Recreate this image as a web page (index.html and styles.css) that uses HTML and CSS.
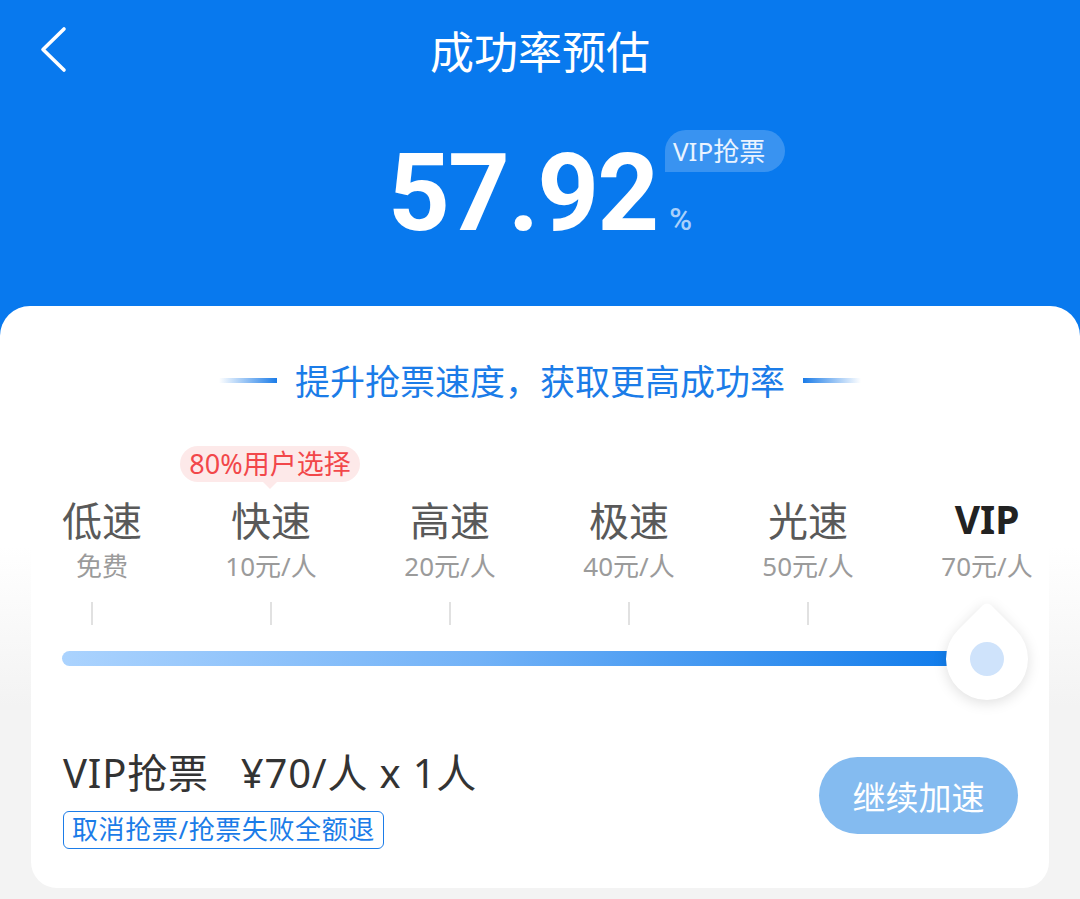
FILE: index.html
```html
<!DOCTYPE html>
<html lang="zh-CN">
<head>
<meta charset="utf-8">
<title>成功率预估</title>
<link rel="stylesheet" href="styles.css">
</head>
<body>
<div class="page">
  <header class="header">
    <div class="nav">
      <svg class="back" width="30" height="48" viewBox="0 0 30 48">
        <path d="M24 4 L3 24.5 L24 45" fill="none" stroke="#fff" stroke-width="3.6" stroke-linecap="round" stroke-linejoin="round"/>
      </svg>
      <div class="title">成功率预估</div>
    </div>
    <div class="score-wrap">
      <div class="score">
        <span class="num">57.92</span>
        <span class="pct">%</span>
        <span class="vip-badge">VIP抢票</span>
      </div>
    </div>
  </header>

  <section class="sheet">
    <div class="heading">
      <span class="line line-left"></span>
      <span class="heading-text">提升抢票速度，获取更高成功率</span>
      <span class="line line-right"></span>
    </div>

    <div class="card">
      <div class="levels">
        <div class="level level-first">
          <div class="lv-name">低速</div>
          <div class="lv-price">免费</div>
          <div class="tick"></div>
        </div>
        <div class="level">
          <div class="hot">80%用户选择</div>
          <div class="lv-name">快速</div>
          <div class="lv-price">10元/人</div>
          <div class="tick"></div>
        </div>
        <div class="level">
          <div class="lv-name">高速</div>
          <div class="lv-price">20元/人</div>
          <div class="tick"></div>
        </div>
        <div class="level">
          <div class="lv-name">极速</div>
          <div class="lv-price">40元/人</div>
          <div class="tick"></div>
        </div>
        <div class="level">
          <div class="lv-name">光速</div>
          <div class="lv-price">50元/人</div>
          <div class="tick"></div>
        </div>
        <div class="level level-active">
          <div class="lv-name">VIP</div>
          <div class="lv-price">70元/人</div>
          <div class="tick tick-hidden"></div>
        </div>
      </div>

      <div class="track-row">
        <div class="track">
          <div class="handle"><span class="handle-dot"></span></div>
        </div>
      </div>

      <div class="bottom">
        <div class="summary">
          <div class="price-line"><span class="plan">VIP抢票</span><span>¥70/人 x 1人</span></div>
          <div class="refund">取消抢票/抢票失败全额退</div>
        </div>
        <button class="cta">继续加速</button>
      </div>
    </div>
  </section>
</div>
</body>
</html>
```

FILE: styles.css
```css
* { box-sizing: border-box; }

html, body {
  margin: 0;
  padding: 0;
}

body {
  width: 1080px;
  height: 899px;
  overflow: hidden;
  background: #0879ee;
  font-family: "Noto Sans", "Noto Sans CJK SC", sans-serif;
}

.page {
  display: flex;
  flex-direction: column;
  height: 899px;
}

.header {
  height: 306px;
  color: #fff;
}

.nav {
  position: relative;
  height: 100px;
  display: flex;
  align-items: center;
  justify-content: center;
}

.back {
  position: absolute;
  left: 40px;
  top: 25px;
}

.title {
  font-size: 44px;
  line-height: 60px;
  color: #fff;
  font-family: "Noto Sans CJK SC", sans-serif;
}

.score-wrap {
  display: flex;
  justify-content: center;
  padding-top: 39px;
}

.score {
  position: relative;
  display: inline-flex;
  align-items: baseline;
}

.num {
  font-family: Roboto, "Noto Sans", sans-serif;
  font-weight: 700;
  font-size: 108px;
  line-height: 108px;
  letter-spacing: -2px;
  color: #fff;
}

.pct {
  margin-left: 12px;
  font-family: Roboto, sans-serif;
  font-weight: 500;
  font-size: 31px;
  color: #a9d0fb;
}

.vip-badge {
  position: absolute;
  top: -9px;
  right: -93px;
  height: 42px;
  width: 120px;
  padding-left: 8px;
  line-height: 42px;
  font-size: 26px;
  color: #eaf3ff;
  background: rgba(255, 255, 255, 0.2);
  border-radius: 21px 21px 21px 0;
  font-family: "Noto Sans", "Noto Sans CJK SC", sans-serif;
  white-space: nowrap;
}

.sheet {
  flex: 1;
  border-radius: 30px 30px 0 0;
  background: linear-gradient(#ffffff 0, #ffffff 240px, #f3f3f3 400px, #f3f3f3 100%);
  padding-top: 50px;
}

.heading {
  display: flex;
  align-items: center;
  justify-content: center;
  height: 48px;
}

.heading-text {
  font-size: 35px;
  line-height: 48px;
  color: #1b7ce8;
  margin: 0 18px;
  font-family: "Noto Sans CJK SC", sans-serif;
}

.line {
  width: 58px;
  height: 5px;
}

.line-left {
  background: linear-gradient(to right, rgba(27, 124, 232, 0), #1b7ce8);
}

.line-right {
  background: linear-gradient(to left, rgba(27, 124, 232, 0), #1b7ce8);
}

.card {
  margin: 26px 31px 0;
  background: #fff;
  border-radius: 0 0 26px 26px;
  padding: 66px 0 39px;
}

.levels {
  display: grid;
  grid-template-columns: repeat(6, 179px);
  margin-left: -28.5px;
}

.level {
  position: relative;
  display: flex;
  flex-direction: column;
  align-items: center;
}

.level-first {
  padding-left: 20px;
}

.lv-name {
  font-size: 40px;
  line-height: 46px;
  color: #595959;
  font-family: "Noto Sans CJK SC", sans-serif;
}

.level-active .lv-name {
  font-family: "Noto Sans", sans-serif;
  font-weight: 700;
  color: #222;
  font-size: 39px;
}

.lv-price {
  margin-top: 8px;
  font-size: 26px;
  line-height: 32px;
  color: #9b9b9b;
  font-family: "Noto Sans", "Noto Sans CJK SC", sans-serif;
}

.tick {
  margin-top: 20px;
  width: 2px;
  height: 23px;
  background: #e1e1e1;
}

.level-first .tick {
  margin-left: -20px;
}

.tick-hidden {
  visibility: hidden;
}

.hot {
  position: absolute;
  top: -50px;
  left: 50%;
  transform: translateX(-50%);
  margin-left: -1px;
  height: 36px;
  width: 180px;
  line-height: 36px;
  text-align: center;
  font-size: 27px;
  color: #f2474a;
  background: #fde9e9;
  border-radius: 18px;
  white-space: nowrap;
  font-family: "Noto Sans", "Noto Sans CJK SC", sans-serif;
}

.hot::after {
  content: "";
  position: absolute;
  left: 50%;
  bottom: -7px;
  margin-left: -7px;
  border-left: 7px solid transparent;
  border-right: 7px solid transparent;
  border-top: 7px solid #fde9e9;
}

.track-row {
  padding: 26px 0 0 31px;
}

.track {
  position: relative;
  width: 925px;
  height: 15px;
  border-radius: 8px;
  background: linear-gradient(to right, #abd3fe, #72b2f7 45%, #0a78ea);
}

.handle {
  position: absolute;
  right: -41px;
  top: -33.5px;
  width: 82px;
  height: 82px;
  background: #fff;
  border-radius: 6px 50% 50% 50%;
  transform: rotate(45deg);
  box-shadow: 2px 2px 14px rgba(0, 0, 0, 0.13);
  display: flex;
  align-items: center;
  justify-content: center;
}

.handle-dot {
  width: 34px;
  height: 34px;
  border-radius: 50%;
  background: #cfe3fb;
}

.bottom {
  margin-top: 84px;
  padding: 0 31px 0 32px;
  display: flex;
  justify-content: space-between;
  align-items: flex-start;
}

.price-line {
  font-size: 40px;
  line-height: 46px;
  color: #333;
  white-space: nowrap;
  letter-spacing: 0.8px;
}

.plan {
  margin-right: 32px;
}

.refund {
  display: inline-block;
  margin-top: 15px;
  height: 38px;
  padding: 0 8px;
  line-height: 35px;
  font-size: 26px;
  letter-spacing: 0.6px;
  color: #1b7ce8;
  border: 1.5px solid #1b7ce8;
  border-radius: 6px;
}

.cta {
  margin-top: 7px;
  width: 199px;
  height: 77px;
  border: none;
  border-radius: 39px;
  background: #84bbf0;
  color: #fff;
  font-size: 33px;
  font-family: "Noto Sans CJK SC", sans-serif;
  padding: 0;
}
```
